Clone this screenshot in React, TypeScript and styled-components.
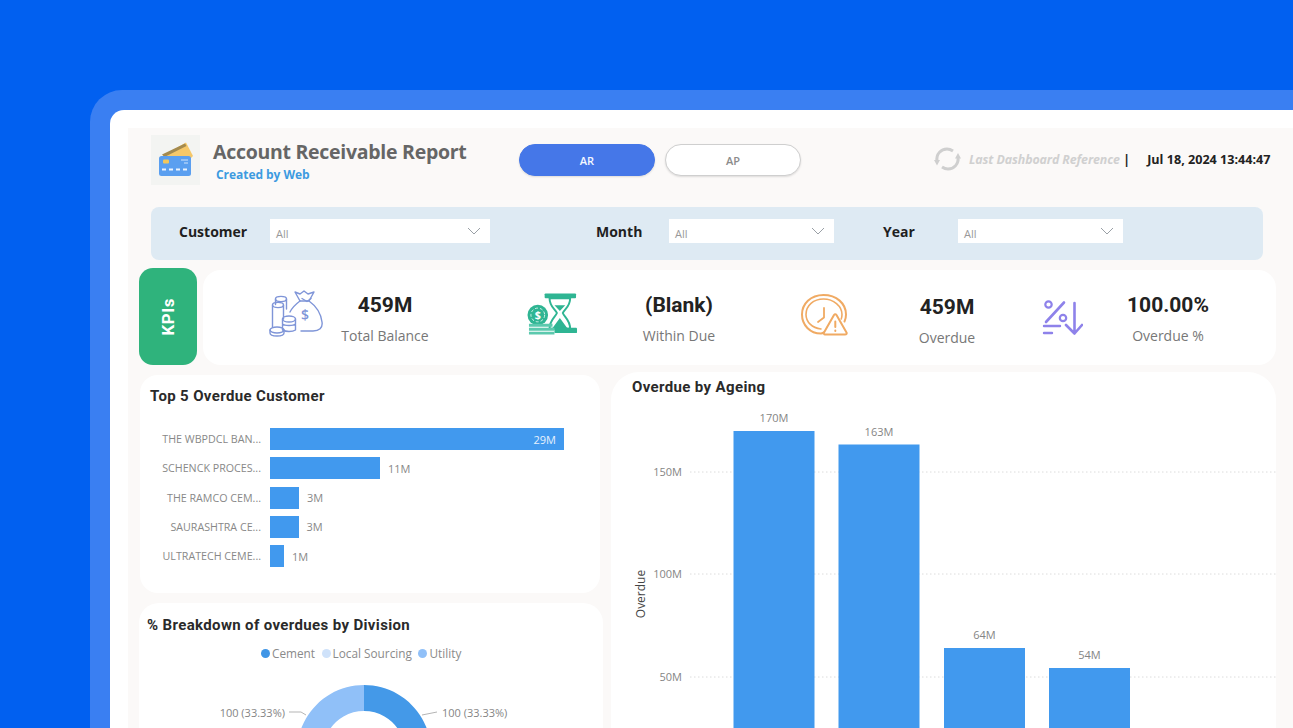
import React from "react";
import styled, { createGlobalStyle } from "styled-components";

const Global = createGlobalStyle`
  html, body { margin: 0; padding: 0; width: 1293px; height: 728px; overflow: hidden; background: #0160f0; }
  #root { width: 1293px; height: 728px; overflow: hidden; }
  * { box-sizing: border-box; }
`;

const Page = styled.div`
  width: 1293px; height: 728px; overflow: hidden; background: #0160f0;
  padding: 90px 0 0 90px; display: flex; font-family: "Open Sans", "Liberation Sans", sans-serif;
`;
const Frame = styled.div`
  flex: 1; height: 700px; background: #3a7ff2; border-top-left-radius: 32px; padding: 20px 0 0 20px; display: flex;
`;
const Sheet = styled.div`
  flex: 1; height: 680px; background: #fff; border-top-left-radius: 14px; padding: 18px 0 0 18px; display: flex;
`;
const Canvas = styled.div`
  flex: 1; height: 662px; background: #fbf9f8; padding-left: 11px; display: flex; flex-direction: column; overflow: hidden;
  & > * { flex-shrink: 0; }
`;

const Header = styled.header`
  height: 79px; padding: 7px 0 0 12px; display: flex; align-items: flex-start;
`;
const LogoTile = styled.div`
  width: 49px; height: 50px; background: #f3f4f2; display: flex; align-items: center; justify-content: center;
`;
const TitleBlock = styled.div`
  margin-left: 13px; width: 306px; display: flex; flex-direction: column;
`;
const Title = styled.h1`
  margin: 3px 0 0; font-size: 19.5px; line-height: 28px; font-weight: 700; color: #666; white-space: nowrap; letter-spacing: -0.28px;
`;
const Subtitle = styled.div`
  margin: 1px 0 0 3px; font-size: 12px; line-height: 16px; font-weight: 700; color: #3d9be0; white-space: nowrap; letter-spacing: -0.05px;
`;
const Pills = styled.div`
  margin-top: 9px; display: flex; gap: 10px;
`;
const Pill = styled.div<{ $active?: boolean }>`
  width: 136px; height: 32px; border-radius: 16px; display: flex; align-items: center; justify-content: center;
  font-size: 11px; font-weight: 600;
  background: ${(p) => (p.$active ? "#4577e8" : "#fff")};
  color: ${(p) => (p.$active ? "#f4f7ff" : "#8b8b8b")};
  border: 1px solid ${(p) => (p.$active ? "#4577e8" : "#cfcfcf")};
  box-shadow: 0 1px 2px rgba(0,0,0,.12);
`;
const Refresh = styled.div`
  margin: 11px 0 0 132px; display: flex; align-items: center; height: 26px;
`;
const RefreshNote = styled.span`
  margin-left: 7px; width: 152px; font: italic 700 12.4px "Open Sans", sans-serif; color: #d0d0d0; white-space: nowrap; letter-spacing: -0.1px;
`;
const Divider = styled.span`
  font-size: 13px; font-weight: 700; color: #222; margin-left: 2px;
`;
const Stamp = styled.span`
  margin-left: 17px; font: 700 12.6px "Open Sans", sans-serif; color: #222; white-space: nowrap;
`;

const FilterBar = styled.div`
  margin-left: 12px; width: 1112px; height: 53px; background: #deeaf3; border-radius: 8px; padding: 12px 0 0 28px; display: flex; align-items: flex-start;
`;
const FilterGroup = styled.div<{ $gap: number }>`
  margin-left: ${(p) => p.$gap}px; display: flex; align-items: center; height: 24px;
`;
const FilterLabel = styled.label<{ $w: number }>`
  width: ${(p) => p.$w}px; font-size: 14px; font-weight: 700; color: #1f1f1f;
`;
const Select = styled.div<{ $w: number }>`
  width: ${(p) => p.$w}px; height: 24px; background: #fff; padding: 4px 9px 0 6px; display: flex; align-items: center; justify-content: space-between;
  font-size: 11px; color: #999;
`;
const ChevronMark = styled.svg`
  margin-top: -4px;
`;

const KpiRow = styled.section`
  margin-top: 8px; height: 97px; display: flex; align-items: flex-start;
`;
const KpiTag = styled.div`
  width: 58px; height: 97px; background: #2fb37c; border-radius: 14px; display: flex; align-items: center; justify-content: center;
`;
const KpiTagText = styled.span`
  writing-mode: vertical-rl; transform: rotate(180deg); color: #fff; font: 700 17px Roboto, sans-serif; letter-spacing: .5px;
`;
const KpiCard = styled.div`
  margin: 2px 0 0 6px; width: 1073px; height: 95px; background: #fff; border-radius: 18px; padding-left: 66px; display: flex;
`;
const Kpi = styled.div<{ $w: number; $drop: number }>`
  width: ${(p) => p.$w}px; flex: none; padding-top: ${(p) => p.$drop}px; display: flex; align-items: flex-start;
`;
const KpiIcon = styled.div<{ $w: number; $top: number }>`
  width: ${(p) => p.$w}px; margin-top: ${(p) => p.$top}px; flex: none; display: flex;
`;
const KpiText = styled.div<{ $offset: number }>`
  margin-left: ${(p) => p.$offset}px; width: 120px; flex: none; text-align: center;
`;
const KpiValue = styled.div`
  font: 700 21px/28px Roboto, sans-serif; color: #222; white-space: nowrap;
`;
const KpiLabel = styled.div`
  margin-top: 7px; font-size: 14px; line-height: 20px; color: #777; white-space: nowrap;
`;

const Board = styled.main`
  margin-top: 7px; display: flex; align-items: flex-start; gap: 8px;
`;
const LeftColumn = styled.div`
  width: 464px; padding-top: 3px; display: flex; flex-direction: column; gap: 10px;
`;
const Card = styled.article`
  background: #fff; border-radius: 18px;
`;
const TopCard = styled(Card)`
  margin-left: 1px; width: 460px; height: 218px; padding: 11px 0 0 10px;
`;
const DivisionCard = styled(Card)`
  width: 464px; height: 200px; padding: 12px 0 0 8px; border-radius: 20px;
`;
const AgeCard = styled(Card)`
  width: 665px; height: 400px; border-radius: 28px; padding: 5px 0 0 0; overflow: hidden;
`;
const CardTitle = styled.h2<{ $left?: number }>`
  margin: 0 0 0 ${(p) => p.$left ?? 0}px; font: 700 15px/20px Roboto, sans-serif; letter-spacing: .36px; color: #2a2a2a; white-space: nowrap;
`;
const BarList = styled.div`
  margin-top: 22px; display: flex; flex-direction: column; gap: 7.3px;
`;
const BarRow = styled.div`
  height: 22px; display: flex; align-items: center;
`;
const BarName = styled.span`
  width: 111px; text-align: right; font-size: 10.7px; color: #888; white-space: nowrap; flex: none;
`;
const Bar = styled.div`
  margin-left: 9px; height: 22px; background: #4199ee; display: flex; align-items: center; justify-content: flex-end; padding-right: 8px; flex: none;
`;
const BarInside = styled.span`
  font-size: 11px; color: #e6f1fd;
`;
const BarValue = styled.span`
  margin-left: 8px; font-size: 11px; color: #888;
`;
const Legend = styled.div`
  margin: 9px 0 0 114px; display: flex; align-items: center; height: 18px; font-size: 11.8px; color: #8a8a8a;
`;
const LegendItem = styled.span<{ $c: string }>`
  display: flex; align-items: center; margin-right: 6.5px; white-space: nowrap;
  &::before { content: ""; width: 9px; height: 9px; border-radius: 50%; background: ${(p) => p.$c}; margin-right: 2px; }
`;
const ChartSvg = styled.svg`
  display: block;
`;
const ChartText = styled.text`
  font: 400 11px "Open Sans", sans-serif; fill: #858585;
`;
const AxisTitle = styled.text`
  font: 400 12px "Open Sans", sans-serif; fill: #444;
`;

const Chevron = () => (
  <ChevronMark width="14" height="8" viewBox="0 0 14 8" fill="none" stroke="#9aa0a6" strokeWidth="1">
    <path d="M1 1l6 6 6-6" />
  </ChevronMark>
);

const CardLogo = () => (
  <svg width="36" height="38" viewBox="0 0 36 38">
    <path d="M1 17 L28 1.5 L35 15 L30 20 H4z" fill="#f6c869" />
    <path d="M4 13.5 L27 2.500 L28.500 5 L6.500 16z" fill="#a48a4e" />
    <rect x="1" y="15" width="32" height="20" rx="2.5" fill="#5a9ff0" />
    <rect x="5" y="18.5" width="6" height="4" rx="1" fill="#f2c75c" />
    <path d="M23 19h7M26 22h4" stroke="#cfe3fb" strokeWidth="1" />
    <path d="M4 28.5h4M11 28.5h4M18 28.5h4M25 28.5h4" stroke="#eaf3fe" strokeWidth="1.8" />
  </svg>
);

const MoneyIcon = () => (
  <svg width="54" height="48" viewBox="0 0 54 48" fill="none" stroke="#7f95d8" strokeWidth="1.4" strokeLinejoin="round" strokeLinecap="round">
    <path d="M26 3l5 2 4-3 4 3 6-2-5 9H31z" />
    <path d="M31 12c-4 3-8 7-10 11M40 12c7 5 12 13 13 21 1 6-3 9-9 9H32" />
    <path d="M33 9.5l5 3 4-3" />
    <text x="36" y="31" fontSize="14" fontFamily="Open Sans" fontWeight="600" fill="#7f95d8" stroke="none" textAnchor="middle">$</text>
    <ellipse cx="12" cy="10" rx="5.5" ry="2.6" />
    <path d="M6.500 10v5.500M17.500 10v10" />
    <ellipse cx="9" cy="16" rx="5.500" ry="2.600" />
    <path d="M3.500 16v22M14.500 16v14" />
    <ellipse cx="8" cy="41" rx="7" ry="3" />
    <path d="M1 41v3c0 2 3 3 7 3s7-1 7-3v-3" />
    <ellipse cx="20" cy="30" rx="6.500" ry="3" />
    <path d="M13.500 30v11c2 1 4 1.500 6.500 1.500s5-.5 6.500-1.500V30M13.500 35c2 2 11 2 13 0" />
  </svg>
);

const HourglassIcon = () => (
  <svg width="52" height="44" viewBox="0 0 52 44">
    <rect x="18" y="2" width="32" height="5" rx="1" fill="#2fb593" />
    <path d="M23 7h21c0 9-6 11-7.500 15C38 26 44 29 44 38H23c0-9 6-12 7.500-16C29 18 23 16 23 7z" fill="#fff" stroke="#2fb593" strokeWidth="2" />
    <path d="M28 14h11l-5.500 6zM33.500 27l8 11H25.500z" fill="#2fb593" />
    <rect x="28" y="37" width="23" height="5.500" rx="1" fill="#2fb593" />
    <circle cx="11" cy="24" r="10.500" fill="#2fb593" />
    <circle cx="11" cy="24" r="7" fill="none" stroke="#d5f1ea" strokeWidth="1" strokeDasharray="3 2" />
    <text x="11" y="28" fontSize="11" fontFamily="Open Sans" fontWeight="700" fill="#fff" textAnchor="middle">$</text>
    <path d="M2 33h24v3H2zM2 37h26v3H2zM2 41h26v3H2z" fill="#5cc9ae" />
  </svg>
);

const ClockIcon = () => (
  <svg width="47" height="42" viewBox="0 0 47 42" fill="none" stroke="#f0aa63" strokeLinecap="round" strokeLinejoin="round">
    <path d="M24 38c-2 1-3 1.500-4 1.500C9 39.500 1 31 1 20.500S9.500 1 22.500 1 45 9.500 45 20.500c0 3-.5 5-1.500 7" strokeWidth="2" />
    <path d="M20 35C11 34 5 28 5 20.500 5 11.500 12.500 5 22.500 5S41 12 41 20.500c0 2-.2 3-.8 4.500" strokeWidth="1.600" />
    <path d="M23 14v9.500L17 28" strokeWidth="1.800" />
    <path d="M33 21L23 38.500c-.5 1 0 2 1 2h20c1.500 0 2-1 1.500-2L35.500 21c-.7-1-1.800-1-2.500 0z" fill="#fff" strokeWidth="2" />
    <path d="M34.300 27.500v5.500M34.300 36.500v.5" strokeWidth="2" />
  </svg>
);

const PercentIcon = () => (
  <svg width="42" height="36" viewBox="0 0 42 36" fill="none" stroke="#8e82ea" strokeLinecap="round" strokeLinejoin="round">
    <circle cx="7.500" cy="4.500" r="3.200" strokeWidth="2.200" />
    <circle cx="22" cy="18" r="3.200" strokeWidth="2.200" />
    <path d="M23 2.500L5 22" strokeWidth="2.600" />
    <path d="M3 26h16M3 33h8" strokeWidth="2.400" />
    <path d="M33.500 3v30M25 25l8.500 8.500L41 25" strokeWidth="2.600" />
  </svg>
);

const RefreshIcon = () => (
  <svg width="29" height="26" viewBox="0 0 29 26" fill="none" stroke="#cfcfcf" strokeWidth="3">
    <path d="M4 15C3 8 8 3 14 3c2.500 0 4.500 1 6 2" />
    <path d="M25 11c1 7-4 12-10 12-2.500 0-4.500-1-6-2" />
    <path d="M22 12.500h6l-3-5.500zM1 14h6L4 19.500z" fill="#cfcfcf" stroke="none" />
  </svg>
);

const topCustomers = [
  { name: "THE WBPDCL BAN...", w: 294, v: "29M", inside: true },
  { name: "SCHENCK PROCES...", w: 110, v: "11M" },
  { name: "THE RAMCO CEM...", w: 29, v: "3M" },
  { name: "SAURASHTRA CE...", w: 28.500, v: "3M" },
  { name: "ULTRATECH CEME...", w: 14, v: "1M" },
];

const ageing = [
  { x: 122.500, top: 34, v: "170M" },
  { x: 227.500, top: 47.500, v: "163M" },
  { x: 333, top: 251, v: "64M" },
  { x: 438, top: 271, v: "54M" },
];

const ticks = [
  { y: 75, t: "150M" },
  { y: 177, t: "100M" },
  { y: 280, t: "50M" },
];

const polar = (deg: number, r: number, cx = 225, cy = 90) => {
  const a = ((deg - 90) * Math.PI) / 180;
  return `${(cx + r * Math.cos(a)).toFixed(2)} ${(cy + r * Math.sin(a)).toFixed(2)}`;
};
const slice = (a: number, b: number, R = 67, r = 41) =>
  `M${polar(a, R)} A${R} ${R} 0 0 1 ${polar(b, R)} L${polar(b, r)} A${r} ${r} 0 0 0 ${polar(a, r)}Z`;

export default function App() {
  return (
    <Page>
      <Global />
      <Frame>
        <Sheet>
          <Canvas>
            <Header>
              <LogoTile><CardLogo /></LogoTile>
              <TitleBlock>
                <Title>Account Receivable Report</Title>
                <Subtitle>Created by Web</Subtitle>
              </TitleBlock>
              <Pills>
                <Pill $active>AR</Pill>
                <Pill>AP</Pill>
              </Pills>
              <Refresh>
                <RefreshIcon />
                <RefreshNote>Last Dashboard Reference</RefreshNote>
                <Divider>|</Divider>
                <Stamp>Jul 18, 2024 13:44:47</Stamp>
              </Refresh>
            </Header>

            <FilterBar>
              <FilterGroup $gap={0}>
                <FilterLabel $w={91}>Customer</FilterLabel>
                <Select $w={220}>All<Chevron /></Select>
              </FilterGroup>
              <FilterGroup $gap={106}>
                <FilterLabel $w={73}>Month</FilterLabel>
                <Select $w={165}>All<Chevron /></Select>
              </FilterGroup>
              <FilterGroup $gap={49}>
                <FilterLabel $w={75}>Year</FilterLabel>
                <Select $w={165}>All<Chevron /></Select>
              </FilterGroup>
            </FilterBar>

            <KpiRow>
              <KpiTag><KpiTagText>KPIs</KpiTagText></KpiTag>
              <KpiCard>
                <Kpi $w={258} $drop={21}>
                  <KpiIcon $w={54} $top={-2}><MoneyIcon /></KpiIcon>
                  <KpiText $offset={2}>
                    <KpiValue>459M</KpiValue>
                    <KpiLabel>Total Balance</KpiLabel>
                  </KpiText>
                </Kpi>
                <Kpi $w={274} $drop={21}>
                  <KpiIcon $w={51} $top={0}><HourglassIcon /></KpiIcon>
                  <KpiText $offset={41}>
                    <KpiValue>(Blank)</KpiValue>
                    <KpiLabel>Within Due</KpiLabel>
                  </KpiText>
                </Kpi>
                <Kpi $w={240} $drop={23}>
                  <KpiIcon $w={47} $top={1}><ClockIcon /></KpiIcon>
                  <KpiText $offset={39}>
                    <KpiValue>459M</KpiValue>
                    <KpiLabel>Overdue</KpiLabel>
                  </KpiText>
                </Kpi>
                <Kpi $w={232} $drop={21}>
                  <KpiIcon $w={42} $top={9}><PercentIcon /></KpiIcon>
                  <KpiText $offset={25}>
                    <KpiValue>100.00%</KpiValue>
                    <KpiLabel>Overdue %</KpiLabel>
                  </KpiText>
                </Kpi>
              </KpiCard>
            </KpiRow>

            <Board>
              <LeftColumn>
                <TopCard>
                  <CardTitle>Top 5 Overdue Customer</CardTitle>
                  <BarList>
                    {topCustomers.map((c) => (
                      <BarRow key={c.name}>
                        <BarName>{c.name}</BarName>
                        <Bar style={{ width: c.w }}>{c.inside && <BarInside>{c.v}</BarInside>}</Bar>
                        {!c.inside && <BarValue>{c.v}</BarValue>}
                      </BarRow>
                    ))}
                  </BarList>
                </TopCard>
                <DivisionCard>
                  <CardTitle>% Breakdown of overdues by Division</CardTitle>
                  <Legend>
                    <LegendItem $c="#3f95e6">Cement</LegendItem>
                    <LegendItem $c="#cfe2fa">Local Sourcing</LegendItem>
                    <LegendItem $c="#90c0f8">Utility</LegendItem>
                  </Legend>
                  <ChartSvg width="455" height="150" viewBox="8 0 455 150">
                    <path d={slice(0, 120)} fill="#4499e8" />
                    <path d={slice(120, 240)} fill="#cfe2fa" />
                    <path d={slice(240, 360)} fill="#90c0f8" />
                    <path d="M283 53 L298 50" stroke="#b5b5b5" fill="none" />
                    <path d="M150 50 L162 50 L167 53" stroke="#b5b5b5" fill="none" />
                    <ChartText x="303" y="55">100 (33.33%)</ChartText>
                    <ChartText x="146" y="55" textAnchor="end">100 (33.33%)</ChartText>
                  </ChartSvg>
                </DivisionCard>
              </LeftColumn>

              <AgeCard>
                <CardTitle $left={21}>Overdue by Ageing</CardTitle>
                <ChartSvg width="665" height="375" viewBox="0 0 665 375">
                  {ticks.map((t) => (
                    <g key={t.t}>
                      <path d={`M79 ${t.y} H665`} stroke="#dcdcdc" strokeDasharray="1.500 2.500" fill="none" />
                      <ChartText x="71" y={t.y + 4} textAnchor="end">{t.t}</ChartText>
                    </g>
                  ))}
                  <AxisTitle transform="translate(34 197) rotate(-90)" textAnchor="middle">Overdue</AxisTitle>
                  {ageing.map((b) => (
                    <g key={b.v}>
                      <rect x={b.x} y={b.top} width="81" height={375 - b.top} fill="#4199ee" />
                      <ChartText x={b.x + 40.500} y={b.top - 9} textAnchor="middle">{b.v}</ChartText>
                    </g>
                  ))}
                </ChartSvg>
              </AgeCard>
            </Board>
          </Canvas>
        </Sheet>
      </Frame>
    </Page>
  );
}
